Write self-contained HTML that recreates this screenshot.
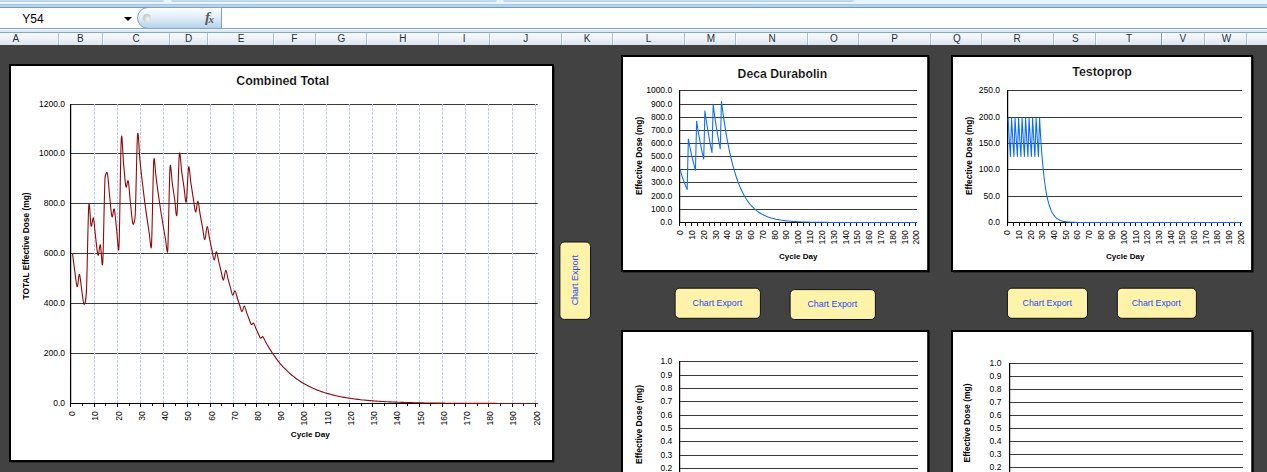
<!DOCTYPE html>
<html lang="en">
<head>
<meta charset="utf-8">
<title>Cycle Charts</title>
<style>
html,body{margin:0;padding:0;}
body{width:1267px;height:472px;overflow:hidden;background:#424242;position:relative;
  font-family:"Liberation Sans",sans-serif;}
#ribbon{position:absolute;left:0;top:0;width:1267px;height:8px;
  background:linear-gradient(to bottom,#e8f5fd 0,#e8f5fd 2px,#e6f9fe 2px,#e3f5fc 4px,#a9c1da 4px,#b3cae4 5px,#b8cfe8 5px,#bbd1ea 7px,#719dbd 7px,#719dbd 8px);}
#ribbon i{position:absolute;top:0;height:2px;background:linear-gradient(to bottom,#c5dbf0 0,#c3d9ef 60%,#a9c5e0 100%);border-radius:0 0 3px 3px;}
#fbar{position:absolute;left:0;top:8px;width:1267px;height:20px;background:#fff;}
#fline{position:absolute;left:0;top:28px;width:1267px;height:5px;
  background:linear-gradient(to bottom,#7fa3c0 0,#7fa3c0 1px,#f2f8fd 1px,#f2f8fd 2px,#dbe8f6 2px,#dbe8f6 4px,#86a8c5 4px,#86a8c5 5px);}
#name{position:absolute;left:22.3px;top:12px;font-size:12px;line-height:14px;color:#000;letter-spacing:0;}
#dd{position:absolute;left:123.5px;top:17px;width:0;height:0;border-left:4px solid transparent;border-right:4px solid transparent;border-top:4.5px solid #000;}
#pill{position:absolute;left:137px;top:7px;width:83px;height:20px;border:1px solid #7fa3c0;border-right:1px solid #7fa3c0;
  border-radius:11px 0 0 11px;background:linear-gradient(to bottom,#fdfeff 0,#e3eefa 45%,#b6d1eb 100%);}
#knob{position:absolute;left:5px;top:6px;width:8px;height:8px;border-radius:50%;
  background:radial-gradient(circle at 65% 65%,#f4f4f4 0,#dcdcdc 40%,#a9adb2 100%);}
#fx{position:absolute;left:67px;top:0px;font-family:"Liberation Serif",serif;font-style:italic;font-weight:700;color:#5c5c5c;font-size:15px;line-height:18px;letter-spacing:-1px;}
#fx small{font-size:11px;position:relative;top:0.5px;letter-spacing:0;margin-left:-0.5px;}
#hdr{position:absolute;left:0;top:33px;width:1267px;height:12px;background:linear-gradient(to bottom,#f7f9fc 0,#eef2f8 45%,#dde4ee 100%);overflow:hidden;}
#hdr .sep{position:absolute;top:0;width:1px;height:12px;box-shadow:1px 0 0 rgba(255,255,255,.55);}
#hdr .col{position:absolute;top:0;width:20px;text-align:center;font-size:10px;line-height:11.2px;color:#1f3038;}
#sheet{position:absolute;left:0;top:0;}
#sheet text{font-family:"Liberation Sans",sans-serif;}
</style>
</head>
<body>
<div id="ribbon"><i style="left:-4px;width:168px"></i><i style="left:171px;width:325.5px"></i><i style="left:503px;width:350.5px"></i></div>
<div id="fbar"></div>
<div id="fline"></div>
<div id="name">Y54</div>
<div id="dd"></div>
<div id="pill"><div id="knob"></div><div id="fx">f<small>x</small></div></div>
<div id="hdr"><i class="sep" style="left:58px;background:#a4bed8"></i><i class="sep" style="left:102px;background:#a4bed8"></i><i class="sep" style="left:169px;background:#a4bed8"></i><i class="sep" style="left:207px;background:#a4bed8"></i><i class="sep" style="left:273px;background:#a4bed8"></i><i class="sep" style="left:315px;background:#a4bed8"></i><i class="sep" style="left:366px;background:#a4bed8"></i><i class="sep" style="left:438px;background:#a4bed8"></i><i class="sep" style="left:489px;background:#a4bed8"></i><i class="sep" style="left:561px;background:#a4bed8"></i><i class="sep" style="left:612px;background:#a4bed8"></i><i class="sep" style="left:684px;background:#a4bed8"></i><i class="sep" style="left:735px;background:#a4bed8"></i><i class="sep" style="left:807px;background:#a4bed8"></i><i class="sep" style="left:858px;background:#a4bed8"></i><i class="sep" style="left:930px;background:#a4bed8"></i><i class="sep" style="left:981px;background:#a4bed8"></i><i class="sep" style="left:1053px;background:#a4bed8"></i><i class="sep" style="left:1095px;background:#a4bed8"></i><i class="sep" style="left:1161px;background:#7e9cba"></i><i class="sep" style="left:1204px;background:#a4bed8"></i><i class="sep" style="left:1246px;background:#a4bed8"></i><span class="col" style="left:5.9px">A</span><span class="col" style="left:70.4px">B</span><span class="col" style="left:126.2px">C</span><span class="col" style="left:178.5px">D</span><span class="col" style="left:231px">E</span><span class="col" style="left:284.4px">F</span><span class="col" style="left:331.4px">G</span><span class="col" style="left:392.8px">H</span><span class="col" style="left:454.2px">I</span><span class="col" style="left:515.8px">J</span><span class="col" style="left:577px">K</span><span class="col" style="left:638.6px">L</span><span class="col" style="left:701px">M</span><span class="col" style="left:762px">N</span><span class="col" style="left:824px">O</span><span class="col" style="left:884.6px">P</span><span class="col" style="left:947px">Q</span><span class="col" style="left:1007px">R</span><span class="col" style="left:1065.4px">S</span><span class="col" style="left:1119px">T</span><span class="col" style="left:1172.8px">V</span><span class="col" style="left:1216.4px">W</span></div>
<svg id="sheet" width="1267" height="472" viewBox="0 0 1267 472">
<g id="chart-combined">
<rect x="11" y="66" width="543.6" height="396.6" fill="#1b1b1b"/>
<rect x="9" y="64" width="545" height="398" fill="#000"/>
<rect x="11" y="66" width="541" height="394" fill="#fff"/>
<text x="282.7" y="85.1" font-size="12.6" text-anchor="middle" font-weight="700" stroke="#fff" stroke-width="0.2" textLength="92.8" lengthAdjust="spacingAndGlyphs">Combined Total</text>
<line x1="71" y1="104.5" x2="537.7" y2="104.5" stroke="#3a3a3a" stroke-width="1"/>
<line x1="71" y1="153.5" x2="537.7" y2="153.5" stroke="#3a3a3a" stroke-width="1"/>
<line x1="71" y1="203.5" x2="537.7" y2="203.5" stroke="#3a3a3a" stroke-width="1"/>
<line x1="71" y1="253.5" x2="537.7" y2="253.5" stroke="#3a3a3a" stroke-width="1"/>
<line x1="71" y1="303.5" x2="537.7" y2="303.5" stroke="#3a3a3a" stroke-width="1"/>
<line x1="71" y1="353.5" x2="537.7" y2="353.5" stroke="#3a3a3a" stroke-width="1"/>
<line x1="94.5" y1="104" x2="94.5" y2="403.5" stroke="#c0cbf6" stroke-width="1" stroke-dasharray="3 1"/>
<line x1="117.5" y1="104" x2="117.5" y2="403.5" stroke="#c0cbf6" stroke-width="1" stroke-dasharray="3 1"/>
<line x1="140.5" y1="104" x2="140.5" y2="403.5" stroke="#c0cbf6" stroke-width="1" stroke-dasharray="3 1"/>
<line x1="163.5" y1="104" x2="163.5" y2="403.5" stroke="#c0cbf6" stroke-width="1" stroke-dasharray="3 1"/>
<line x1="187.5" y1="104" x2="187.5" y2="403.5" stroke="#c0cbf6" stroke-width="1" stroke-dasharray="3 1"/>
<line x1="210.5" y1="104" x2="210.5" y2="403.5" stroke="#c0cbf6" stroke-width="1" stroke-dasharray="3 1"/>
<line x1="233.5" y1="104" x2="233.5" y2="403.5" stroke="#c0cbf6" stroke-width="1" stroke-dasharray="3 1"/>
<line x1="256.5" y1="104" x2="256.5" y2="403.5" stroke="#c0cbf6" stroke-width="1" stroke-dasharray="3 1"/>
<line x1="279.5" y1="104" x2="279.5" y2="403.5" stroke="#c0cbf6" stroke-width="1" stroke-dasharray="3 1"/>
<line x1="303.5" y1="104" x2="303.5" y2="403.5" stroke="#c0cbf6" stroke-width="1" stroke-dasharray="3 1"/>
<line x1="326.5" y1="104" x2="326.5" y2="403.5" stroke="#c0cbf6" stroke-width="1" stroke-dasharray="3 1"/>
<line x1="349.5" y1="104" x2="349.5" y2="403.5" stroke="#c0cbf6" stroke-width="1" stroke-dasharray="3 1"/>
<line x1="372.5" y1="104" x2="372.5" y2="403.5" stroke="#c0cbf6" stroke-width="1" stroke-dasharray="3 1"/>
<line x1="396.5" y1="104" x2="396.5" y2="403.5" stroke="#c0cbf6" stroke-width="1" stroke-dasharray="3 1"/>
<line x1="419.5" y1="104" x2="419.5" y2="403.5" stroke="#c0cbf6" stroke-width="1" stroke-dasharray="3 1"/>
<line x1="442.5" y1="104" x2="442.5" y2="403.5" stroke="#c0cbf6" stroke-width="1" stroke-dasharray="3 1"/>
<line x1="465.5" y1="104" x2="465.5" y2="403.5" stroke="#c0cbf6" stroke-width="1" stroke-dasharray="3 1"/>
<line x1="488.5" y1="104" x2="488.5" y2="403.5" stroke="#c0cbf6" stroke-width="1" stroke-dasharray="3 1"/>
<line x1="512.5" y1="104" x2="512.5" y2="403.5" stroke="#c0cbf6" stroke-width="1" stroke-dasharray="3 1"/>
<line x1="535.5" y1="104" x2="535.5" y2="403.5" stroke="#c0cbf6" stroke-width="1" stroke-dasharray="3 1"/>
<line x1="70.6" y1="104" x2="70.6" y2="404" stroke="#000" stroke-width="1.25"/>
<line x1="70.2" y1="403.5" x2="537.7" y2="403.5" stroke="#000" stroke-width="1.2"/>
<line x1="70.5" y1="403.5" x2="70.5" y2="407" stroke="#000" stroke-width="1"/>
<line x1="82.5" y1="403.5" x2="82.5" y2="406" stroke="#000" stroke-width="1"/>
<line x1="94.5" y1="403.5" x2="94.5" y2="407" stroke="#000" stroke-width="1"/>
<line x1="105.5" y1="403.5" x2="105.5" y2="406" stroke="#000" stroke-width="1"/>
<line x1="117.5" y1="403.5" x2="117.5" y2="407" stroke="#000" stroke-width="1"/>
<line x1="129.5" y1="403.5" x2="129.5" y2="406" stroke="#000" stroke-width="1"/>
<line x1="140.5" y1="403.5" x2="140.5" y2="407" stroke="#000" stroke-width="1"/>
<line x1="152.5" y1="403.5" x2="152.5" y2="406" stroke="#000" stroke-width="1"/>
<line x1="163.5" y1="403.5" x2="163.5" y2="407" stroke="#000" stroke-width="1"/>
<line x1="175.5" y1="403.5" x2="175.5" y2="406" stroke="#000" stroke-width="1"/>
<line x1="187.5" y1="403.5" x2="187.5" y2="407" stroke="#000" stroke-width="1"/>
<line x1="198.5" y1="403.5" x2="198.5" y2="406" stroke="#000" stroke-width="1"/>
<line x1="210.5" y1="403.5" x2="210.5" y2="407" stroke="#000" stroke-width="1"/>
<line x1="221.5" y1="403.5" x2="221.5" y2="406" stroke="#000" stroke-width="1"/>
<line x1="233.5" y1="403.5" x2="233.5" y2="407" stroke="#000" stroke-width="1"/>
<line x1="245.5" y1="403.5" x2="245.5" y2="406" stroke="#000" stroke-width="1"/>
<line x1="256.5" y1="403.5" x2="256.5" y2="407" stroke="#000" stroke-width="1"/>
<line x1="268.5" y1="403.5" x2="268.5" y2="406" stroke="#000" stroke-width="1"/>
<line x1="279.5" y1="403.5" x2="279.5" y2="407" stroke="#000" stroke-width="1"/>
<line x1="291.5" y1="403.5" x2="291.5" y2="406" stroke="#000" stroke-width="1"/>
<line x1="303.5" y1="403.5" x2="303.5" y2="407" stroke="#000" stroke-width="1"/>
<line x1="314.5" y1="403.5" x2="314.5" y2="406" stroke="#000" stroke-width="1"/>
<line x1="326.5" y1="403.5" x2="326.5" y2="407" stroke="#000" stroke-width="1"/>
<line x1="338.5" y1="403.5" x2="338.5" y2="406" stroke="#000" stroke-width="1"/>
<line x1="349.5" y1="403.5" x2="349.5" y2="407" stroke="#000" stroke-width="1"/>
<line x1="361.5" y1="403.5" x2="361.5" y2="406" stroke="#000" stroke-width="1"/>
<line x1="372.5" y1="403.5" x2="372.5" y2="407" stroke="#000" stroke-width="1"/>
<line x1="384.5" y1="403.5" x2="384.5" y2="406" stroke="#000" stroke-width="1"/>
<line x1="396.5" y1="403.5" x2="396.5" y2="407" stroke="#000" stroke-width="1"/>
<line x1="407.5" y1="403.5" x2="407.5" y2="406" stroke="#000" stroke-width="1"/>
<line x1="419.5" y1="403.5" x2="419.5" y2="407" stroke="#000" stroke-width="1"/>
<line x1="430.5" y1="403.5" x2="430.5" y2="406" stroke="#000" stroke-width="1"/>
<line x1="442.5" y1="403.5" x2="442.5" y2="407" stroke="#000" stroke-width="1"/>
<line x1="454.5" y1="403.5" x2="454.5" y2="406" stroke="#000" stroke-width="1"/>
<line x1="465.5" y1="403.5" x2="465.5" y2="407" stroke="#000" stroke-width="1"/>
<line x1="477.5" y1="403.5" x2="477.5" y2="406" stroke="#000" stroke-width="1"/>
<line x1="488.5" y1="403.5" x2="488.5" y2="407" stroke="#000" stroke-width="1"/>
<line x1="500.5" y1="403.5" x2="500.5" y2="406" stroke="#000" stroke-width="1"/>
<line x1="512.5" y1="403.5" x2="512.5" y2="407" stroke="#000" stroke-width="1"/>
<line x1="523.5" y1="403.5" x2="523.5" y2="406" stroke="#000" stroke-width="1"/>
<line x1="535.5" y1="403.5" x2="535.5" y2="407" stroke="#000" stroke-width="1"/>
<text x="65" y="106.7" font-size="8.5" text-anchor="end">1200.0</text>
<text x="65" y="155.7" font-size="8.5" text-anchor="end">1000.0</text>
<text x="65" y="205.7" font-size="8.5" text-anchor="end">800.0</text>
<text x="65" y="255.7" font-size="8.5" text-anchor="end">600.0</text>
<text x="65" y="305.7" font-size="8.5" text-anchor="end">400.0</text>
<text x="65" y="355.7" font-size="8.5" text-anchor="end">200.0</text>
<text x="65" y="405.7" font-size="8.5" text-anchor="end">0.0</text>
<text x="75.26" y="411.3" font-size="8.5" text-anchor="end" transform="rotate(-90 75.26 411.3)">0</text>
<text x="98.48" y="411.3" font-size="8.5" text-anchor="end" transform="rotate(-90 98.48 411.3)">10</text>
<text x="121.7" y="411.3" font-size="8.5" text-anchor="end" transform="rotate(-90 121.7 411.3)">20</text>
<text x="144.92" y="411.3" font-size="8.5" text-anchor="end" transform="rotate(-90 144.92 411.3)">30</text>
<text x="168.14" y="411.3" font-size="8.5" text-anchor="end" transform="rotate(-90 168.14 411.3)">40</text>
<text x="191.36" y="411.3" font-size="8.5" text-anchor="end" transform="rotate(-90 191.36 411.3)">50</text>
<text x="214.57" y="411.3" font-size="8.5" text-anchor="end" transform="rotate(-90 214.57 411.3)">60</text>
<text x="237.79" y="411.3" font-size="8.5" text-anchor="end" transform="rotate(-90 237.79 411.3)">70</text>
<text x="261.01" y="411.3" font-size="8.5" text-anchor="end" transform="rotate(-90 261.01 411.3)">80</text>
<text x="284.23" y="411.3" font-size="8.5" text-anchor="end" transform="rotate(-90 284.23 411.3)">90</text>
<text x="307.45" y="411.3" font-size="8.5" text-anchor="end" transform="rotate(-90 307.45 411.3)">100</text>
<text x="330.67" y="411.3" font-size="8.5" text-anchor="end" transform="rotate(-90 330.67 411.3)">110</text>
<text x="353.89" y="411.3" font-size="8.5" text-anchor="end" transform="rotate(-90 353.89 411.3)">120</text>
<text x="377.11" y="411.3" font-size="8.5" text-anchor="end" transform="rotate(-90 377.11 411.3)">130</text>
<text x="400.33" y="411.3" font-size="8.5" text-anchor="end" transform="rotate(-90 400.33 411.3)">140</text>
<text x="423.54" y="411.3" font-size="8.5" text-anchor="end" transform="rotate(-90 423.54 411.3)">150</text>
<text x="446.76" y="411.3" font-size="8.5" text-anchor="end" transform="rotate(-90 446.76 411.3)">160</text>
<text x="469.98" y="411.3" font-size="8.5" text-anchor="end" transform="rotate(-90 469.98 411.3)">170</text>
<text x="493.2" y="411.3" font-size="8.5" text-anchor="end" transform="rotate(-90 493.2 411.3)">180</text>
<text x="516.42" y="411.3" font-size="8.5" text-anchor="end" transform="rotate(-90 516.42 411.3)">190</text>
<text x="539.64" y="411.3" font-size="8.5" text-anchor="end" transform="rotate(-90 539.64 411.3)">200</text>
<text x="29.2" y="246" font-size="8.3" text-anchor="middle" font-weight="700" transform="rotate(-90 29.2 246)" textLength="107" lengthAdjust="spacingAndGlyphs">TOTAL Effective Dose (mg)</text>
<text x="310.3" y="436.9" font-size="8" text-anchor="middle" font-weight="700" textLength="38.9" lengthAdjust="spacingAndGlyphs">Cycle Day</text>
<path d="M72.51 253.5C72.9 256.5 74.06 265.96 74.83 271.5C75.61 277.04 76.38 286.26 77.15 286.73C77.93 287.21 78.7 273.68 79.48 274.35C80.25 275.03 81.02 285.75 81.8 290.79C82.57 295.83 83.35 304.56 84.12 304.58C84.89 304.59 86.12 297.81 86.44 290.86C87.22 274.4 87.99 216.62 88.76 205.81C89.49 195.69 90.31 223.91 91.09 225.97C91.86 228.02 92.63 216.11 93.41 218.15C94.18 220.18 94.96 231.99 95.73 238.17C96.5 244.35 97.28 254.13 98.05 255.23C98.83 256.34 99.6 243.5 100.37 244.79C101.15 246.08 102.06 272.14 102.7 262.99C103.47 251.88 104.24 193.1 105.02 178.14C105.16 175.43 106.68 170.6 107.34 173.23C108.11 176.3 108.89 189.31 109.66 196.55C110.44 203.78 111.21 214.57 111.98 216.66C112.76 218.75 113.53 206.87 114.3 209.09C115.08 211.3 115.85 223.5 116.63 229.96C117.4 236.42 118.49 256.83 118.95 247.83C119.72 232.68 120.5 153.04 121.27 139.05C121.96 126.59 122.82 155.98 123.59 163.91C124.37 171.84 125.14 183.74 125.91 186.63C126.67 189.46 127.48 178.4 128.24 181.23C129.01 184.15 129.78 197.01 130.56 204.12C131.33 211.22 132.11 221.97 132.88 223.86C133.65 225.74 134.97 219.79 135.2 215.43C135.98 200.66 136.75 144.56 137.52 135.23C138.3 125.91 139.07 151.86 139.85 159.48C140.62 167.1 141.39 174.2 142.17 180.97C142.94 187.73 143.72 194.05 144.49 200.09C145.26 206.12 146.04 211.76 146.81 217.16C147.59 222.56 148.36 227.62 149.13 232.46C149.91 237.3 151.01 253.17 151.46 246.21C152.23 234.22 153 171.95 153.78 160.52C154.36 151.9 155.33 171.93 156.1 177.66C156.87 183.39 157.65 189.41 158.42 194.93C159.19 200.44 159.97 205.69 160.74 210.74C161.52 215.79 162.29 220.6 163.06 225.23C163.84 229.86 164.61 234.28 165.39 238.53C166.16 242.78 167.3 256.95 167.71 250.75C168.48 238.86 169.26 178.43 170.03 167.23C170.6 159 171.58 178.21 172.35 183.55C173.13 188.9 173.9 194.23 174.67 199.28C175.45 204.33 176.23 221.23 177 213.88C177.77 206.41 178.54 161.59 179.32 154.51C180.09 147.43 180.87 165.96 181.64 171.39C182.41 176.82 183.19 182.03 183.96 187.08C184.74 192.12 185.51 204.97 186.28 201.66C187.06 198.35 187.83 170.3 188.61 167.22C189.38 164.14 190.15 178.04 190.93 183.18C191.7 188.32 192.48 193.26 193.25 198.05C194.02 202.84 194.8 211.36 195.57 211.91C196.35 212.46 197.12 200.82 197.89 201.33C198.67 201.84 199.44 210.58 200.21 214.97C200.99 219.37 201.76 223.6 202.54 227.7C203.31 231.8 204.08 239.75 204.86 239.57C205.63 239.4 206.41 226.83 207.18 226.66C207.95 226.48 208.73 234.68 209.5 238.5C210.28 242.32 211.05 245.99 211.82 249.56C212.6 253.12 213.37 259.51 214.15 259.88C214.92 260.25 215.69 251.44 216.47 251.77C217.24 252.1 218.02 258.61 218.79 261.86C219.56 265.11 220.34 268.24 221.11 271.28C221.89 274.32 222.66 280.24 223.43 280.08C224.21 279.91 224.98 270.45 225.76 270.29C226.53 270.14 227.3 276.29 228.08 279.14C228.85 281.99 229.63 284.74 230.4 287.4C231.17 290.06 231.95 294.54 232.72 295.12C233.5 295.69 234.27 290.3 235.04 290.83C235.82 291.35 236.59 295.88 237.37 298.28C238.14 300.68 238.91 303 239.69 305.24C240.46 307.49 241.23 311.61 242.01 311.75C242.78 311.89 243.56 305.94 244.33 306.08C245.1 306.22 245.88 310.49 246.65 312.59C247.43 314.69 248.2 316.72 248.97 318.68C249.75 320.64 250.52 323.62 251.3 324.37C252.07 325.13 252.84 322.51 253.62 323.2C254.39 323.89 255.17 326.8 255.94 328.51C256.71 330.23 257.49 331.88 258.26 333.48C259.04 335.08 259.81 337.58 260.58 338.12C261.36 338.66 262.13 336.21 262.91 336.71C263.68 337.22 264.45 339.71 265.23 341.14C266 342.57 266.78 343.95 267.55 345.28C268.32 346.62 269.1 347.91 269.87 349.16C270.65 350.41 271.42 351.61 272.19 352.78C272.97 353.95 273.74 355.07 274.52 356.16C275.29 357.26 276.06 358.31 276.84 359.33C277.61 360.35 278.39 361.34 279.16 362.29C279.93 363.25 280.71 364.18 281.48 365.06C282.26 365.95 283.03 366.78 283.8 367.59C284.58 368.41 285.35 369.19 286.12 369.96C286.9 370.72 287.67 371.45 288.45 372.16C289.22 372.88 289.99 373.56 290.77 374.23C291.54 374.89 292.32 375.53 293.09 376.15C293.86 376.77 294.64 377.37 295.41 377.95C296.19 378.53 296.96 379.09 297.73 379.63C298.51 380.17 299.28 380.69 300.06 381.2C300.83 381.71 301.6 382.19 302.38 382.67C303.15 383.14 303.93 383.6 304.7 384.04C305.47 384.48 306.25 384.9 307.02 385.32C307.8 385.73 308.57 386.13 309.34 386.51C310.12 386.9 310.89 387.27 311.67 387.63C312.44 387.99 313.21 388.34 313.99 388.67C314.76 389.01 315.54 389.33 316.31 389.65C317.08 389.96 317.86 390.26 318.63 390.56C319.41 390.85 320.18 391.13 320.95 391.41C321.73 391.68 322.5 391.94 323.28 392.2C324.05 392.46 324.82 392.7 325.6 392.94C326.37 393.18 327.14 393.41 327.92 393.64C328.69 393.86 329.47 394.08 330.24 394.28C331.01 394.49 331.79 394.69 332.56 394.89C333.34 395.08 334.11 395.27 334.88 395.45C335.66 395.64 336.43 395.81 337.21 395.98C337.98 396.15 338.75 396.32 339.53 396.48C340.3 396.64 341.08 396.79 341.85 396.94C342.62 397.09 343.4 397.23 344.17 397.37C344.95 397.51 345.72 397.64 346.49 397.77C347.27 397.9 348.04 398.03 348.82 398.15C349.59 398.27 350.36 398.38 351.14 398.5C351.91 398.61 352.69 398.72 353.46 398.83C354.23 398.93 355.01 399.03 355.78 399.13C356.56 399.23 357.33 399.33 358.1 399.42C358.88 399.51 359.65 399.6 360.43 399.69C361.2 399.77 361.97 399.86 362.75 399.94C363.52 400.02 364.3 400.1 365.07 400.17C365.84 400.25 366.62 400.32 367.39 400.39C368.17 400.46 368.94 400.53 369.71 400.59C370.49 400.66 371.26 400.72 372.03 400.78C372.81 400.84 373.58 400.9 374.36 400.96C375.13 401.02 375.9 401.07 376.68 401.13C377.45 401.18 378.23 401.23 379 401.28C379.77 401.33 380.55 401.38 381.32 401.43C382.1 401.48 382.87 401.52 383.64 401.56C384.42 401.61 385.19 401.65 385.97 401.69C386.74 401.73 387.51 401.77 388.29 401.81C389.06 401.85 389.84 401.88 390.61 401.92C391.38 401.96 392.16 401.99 392.93 402.02C393.71 402.06 394.48 402.09 395.25 402.12C396.03 402.15 396.8 402.18 397.58 402.21C398.35 402.24 399.12 402.27 399.9 402.3C400.67 402.32 401.45 402.35 402.22 402.37C402.99 402.4 403.77 402.42 404.54 402.45C405.32 402.47 406.09 402.49 406.86 402.52C407.64 402.54 408.41 402.56 409.19 402.58C409.96 402.6 410.73 402.62 411.51 402.64C412.28 402.66 413.05 402.68 413.83 402.7C414.6 402.72 415.38 402.73 416.15 402.75C416.92 402.77 417.7 402.78 418.47 402.8C419.25 402.82 420.02 402.83 420.79 402.85C421.57 402.86 422.34 402.87 423.12 402.89C423.89 402.9 424.66 402.92 425.44 402.93C426.21 402.94 426.99 402.95 427.76 402.97C428.53 402.98 429.31 402.99 430.08 403C430.86 403.01 431.63 403.02 432.4 403.03C433.18 403.04 433.95 403.05 434.73 403.06C435.5 403.07 436.27 403.08 437.05 403.09C437.82 403.1 438.6 403.11 439.37 403.12C440.14 403.13 440.92 403.14 441.69 403.14C442.47 403.15 443.24 403.16 444.01 403.17C444.79 403.17 445.56 403.18 446.34 403.19C447.11 403.2 447.88 403.2 448.66 403.21C449.43 403.22 450.21 403.22 450.98 403.23C451.75 403.23 452.53 403.24 453.3 403.25C454.07 403.25 454.85 403.26 455.62 403.26C456.4 403.27 457.17 403.27 457.94 403.28C458.72 403.28 459.49 403.29 460.27 403.29C461.04 403.3 461.81 403.3 462.59 403.31C463.36 403.31 464.14 403.31 464.91 403.32C465.68 403.32 466.46 403.33 467.23 403.33C468.01 403.33 468.78 403.34 469.55 403.34C470.33 403.35 471.1 403.35 471.88 403.35C472.65 403.36 473.42 403.36 474.2 403.36C474.97 403.36 475.75 403.37 476.52 403.37C477.29 403.37 478.07 403.38 478.84 403.38C479.62 403.38 480.39 403.38 481.16 403.39C481.94 403.39 482.71 403.39 483.49 403.39C484.26 403.4 485.03 403.4 485.81 403.4C486.58 403.4 487.36 403.41 488.13 403.41C488.9 403.41 489.68 403.41 490.45 403.41C491.23 403.42 492 403.42 492.77 403.42C493.55 403.42 494.32 403.42 495.1 403.42C495.87 403.43 496.64 403.43 497.42 403.43C498.19 403.43 498.96 403.43 499.74 403.43C500.51 403.44 501.29 403.44 502.06 403.44C502.83 403.44 503.61 403.44 504.38 403.44C505.16 403.44 505.93 403.45 506.7 403.45C507.48 403.45 508.25 403.45 509.03 403.45C509.8 403.45 510.57 403.45 511.35 403.45C512.12 403.45 512.9 403.46 513.67 403.46C514.44 403.46 515.22 403.46 515.99 403.46C516.77 403.46 517.54 403.46 518.31 403.46C519.09 403.46 519.86 403.46 520.64 403.46C521.41 403.47 522.18 403.47 522.96 403.47C523.73 403.47 524.51 403.47 525.28 403.47C526.05 403.47 526.83 403.47 527.6 403.47C528.38 403.47 529.15 403.47 529.92 403.47C530.7 403.47 531.47 403.47 532.25 403.47C533.02 403.48 533.79 403.48 534.57 403.48C535.34 403.48 536.5 403.48 536.89 403.48" fill="none" stroke="#8e0a0a" stroke-width="1.1" stroke-linejoin="round"/>
</g>
<g id="chart-deca">
<rect x="623" y="57" width="306.8" height="215.6" fill="#1b1b1b"/>
<rect x="621" y="55" width="308.2" height="217" fill="#000"/>
<rect x="623" y="57" width="304.2" height="213" fill="#fff"/>
<text x="782.4" y="77.8" font-size="12.4" text-anchor="middle" font-weight="700" stroke="#fff" stroke-width="0.2" textLength="89.6" lengthAdjust="spacingAndGlyphs">Deca Durabolin</text>
<line x1="679.5" y1="90.5" x2="917" y2="90.5" stroke="#3a3a3a" stroke-width="1"/>
<line x1="679.5" y1="104.5" x2="917" y2="104.5" stroke="#3a3a3a" stroke-width="1"/>
<line x1="679.5" y1="117.5" x2="917" y2="117.5" stroke="#3a3a3a" stroke-width="1"/>
<line x1="679.5" y1="130.5" x2="917" y2="130.5" stroke="#3a3a3a" stroke-width="1"/>
<line x1="679.5" y1="143.5" x2="917" y2="143.5" stroke="#3a3a3a" stroke-width="1"/>
<line x1="679.5" y1="156.5" x2="917" y2="156.5" stroke="#3a3a3a" stroke-width="1"/>
<line x1="679.5" y1="169.5" x2="917" y2="169.5" stroke="#3a3a3a" stroke-width="1"/>
<line x1="679.5" y1="182.5" x2="917" y2="182.5" stroke="#3a3a3a" stroke-width="1"/>
<line x1="679.5" y1="196.5" x2="917" y2="196.5" stroke="#3a3a3a" stroke-width="1"/>
<line x1="679.5" y1="209.5" x2="917" y2="209.5" stroke="#3a3a3a" stroke-width="1"/>
<line x1="679.6" y1="90" x2="679.6" y2="223" stroke="#000" stroke-width="1.25"/>
<line x1="679" y1="222.5" x2="917" y2="222.5" stroke="#000" stroke-width="1.1"/>
<line x1="679.5" y1="222.5" x2="679.5" y2="226" stroke="#000" stroke-width="1"/>
<line x1="685.5" y1="222.5" x2="685.5" y2="226" stroke="#000" stroke-width="1"/>
<line x1="691.5" y1="222.5" x2="691.5" y2="226" stroke="#000" stroke-width="1"/>
<line x1="697.5" y1="222.5" x2="697.5" y2="226" stroke="#000" stroke-width="1"/>
<line x1="703.5" y1="222.5" x2="703.5" y2="226" stroke="#000" stroke-width="1"/>
<line x1="709.5" y1="222.5" x2="709.5" y2="226" stroke="#000" stroke-width="1"/>
<line x1="714.5" y1="222.5" x2="714.5" y2="226" stroke="#000" stroke-width="1"/>
<line x1="720.5" y1="222.5" x2="720.5" y2="226" stroke="#000" stroke-width="1"/>
<line x1="726.5" y1="222.5" x2="726.5" y2="226" stroke="#000" stroke-width="1"/>
<line x1="732.5" y1="222.5" x2="732.5" y2="226" stroke="#000" stroke-width="1"/>
<line x1="738.5" y1="222.5" x2="738.5" y2="226" stroke="#000" stroke-width="1"/>
<line x1="744.5" y1="222.5" x2="744.5" y2="226" stroke="#000" stroke-width="1"/>
<line x1="750.5" y1="222.5" x2="750.5" y2="226" stroke="#000" stroke-width="1"/>
<line x1="756.5" y1="222.5" x2="756.5" y2="226" stroke="#000" stroke-width="1"/>
<line x1="762.5" y1="222.5" x2="762.5" y2="226" stroke="#000" stroke-width="1"/>
<line x1="768.5" y1="222.5" x2="768.5" y2="226" stroke="#000" stroke-width="1"/>
<line x1="774.5" y1="222.5" x2="774.5" y2="226" stroke="#000" stroke-width="1"/>
<line x1="779.5" y1="222.5" x2="779.5" y2="226" stroke="#000" stroke-width="1"/>
<line x1="785.5" y1="222.5" x2="785.5" y2="226" stroke="#000" stroke-width="1"/>
<line x1="791.5" y1="222.5" x2="791.5" y2="226" stroke="#000" stroke-width="1"/>
<line x1="797.5" y1="222.5" x2="797.5" y2="226" stroke="#000" stroke-width="1"/>
<line x1="803.5" y1="222.5" x2="803.5" y2="226" stroke="#000" stroke-width="1"/>
<line x1="809.5" y1="222.5" x2="809.5" y2="226" stroke="#000" stroke-width="1"/>
<line x1="815.5" y1="222.5" x2="815.5" y2="226" stroke="#000" stroke-width="1"/>
<line x1="821.5" y1="222.5" x2="821.5" y2="226" stroke="#000" stroke-width="1"/>
<line x1="827.5" y1="222.5" x2="827.5" y2="226" stroke="#000" stroke-width="1"/>
<line x1="833.5" y1="222.5" x2="833.5" y2="226" stroke="#000" stroke-width="1"/>
<line x1="839.5" y1="222.5" x2="839.5" y2="226" stroke="#000" stroke-width="1"/>
<line x1="844.5" y1="222.5" x2="844.5" y2="226" stroke="#000" stroke-width="1"/>
<line x1="850.5" y1="222.5" x2="850.5" y2="226" stroke="#000" stroke-width="1"/>
<line x1="856.5" y1="222.5" x2="856.5" y2="226" stroke="#000" stroke-width="1"/>
<line x1="862.5" y1="222.5" x2="862.5" y2="226" stroke="#000" stroke-width="1"/>
<line x1="868.5" y1="222.5" x2="868.5" y2="226" stroke="#000" stroke-width="1"/>
<line x1="874.5" y1="222.5" x2="874.5" y2="226" stroke="#000" stroke-width="1"/>
<line x1="880.5" y1="222.5" x2="880.5" y2="226" stroke="#000" stroke-width="1"/>
<line x1="886.5" y1="222.5" x2="886.5" y2="226" stroke="#000" stroke-width="1"/>
<line x1="892.5" y1="222.5" x2="892.5" y2="226" stroke="#000" stroke-width="1"/>
<line x1="898.5" y1="222.5" x2="898.5" y2="226" stroke="#000" stroke-width="1"/>
<line x1="904.5" y1="222.5" x2="904.5" y2="226" stroke="#000" stroke-width="1"/>
<line x1="909.5" y1="222.5" x2="909.5" y2="226" stroke="#000" stroke-width="1"/>
<line x1="915.5" y1="222.5" x2="915.5" y2="226" stroke="#000" stroke-width="1"/>
<text x="672.2" y="93.1" font-size="8.5" text-anchor="end">1000.0</text>
<text x="672.2" y="107.1" font-size="8.5" text-anchor="end">900.0</text>
<text x="672.2" y="120.1" font-size="8.5" text-anchor="end">800.0</text>
<text x="672.2" y="133.1" font-size="8.5" text-anchor="end">700.0</text>
<text x="672.2" y="146.1" font-size="8.5" text-anchor="end">600.0</text>
<text x="672.2" y="159.1" font-size="8.5" text-anchor="end">500.0</text>
<text x="672.2" y="172.1" font-size="8.5" text-anchor="end">400.0</text>
<text x="672.2" y="185.1" font-size="8.5" text-anchor="end">300.0</text>
<text x="672.2" y="199.1" font-size="8.5" text-anchor="end">200.0</text>
<text x="672.2" y="212.1" font-size="8.5" text-anchor="end">100.0</text>
<text x="672.2" y="225.1" font-size="8.5" text-anchor="end">0.0</text>
<text x="683.14" y="230.3" font-size="8.5" text-anchor="end" transform="rotate(-90 683.14 230.3)">0</text>
<text x="694.96" y="230.3" font-size="8.5" text-anchor="end" transform="rotate(-90 694.96 230.3)">10</text>
<text x="706.77" y="230.3" font-size="8.5" text-anchor="end" transform="rotate(-90 706.77 230.3)">20</text>
<text x="718.59" y="230.3" font-size="8.5" text-anchor="end" transform="rotate(-90 718.59 230.3)">30</text>
<text x="730.4" y="230.3" font-size="8.5" text-anchor="end" transform="rotate(-90 730.4 230.3)">40</text>
<text x="742.22" y="230.3" font-size="8.5" text-anchor="end" transform="rotate(-90 742.22 230.3)">50</text>
<text x="754.04" y="230.3" font-size="8.5" text-anchor="end" transform="rotate(-90 754.04 230.3)">60</text>
<text x="765.85" y="230.3" font-size="8.5" text-anchor="end" transform="rotate(-90 765.85 230.3)">70</text>
<text x="777.67" y="230.3" font-size="8.5" text-anchor="end" transform="rotate(-90 777.67 230.3)">80</text>
<text x="789.48" y="230.3" font-size="8.5" text-anchor="end" transform="rotate(-90 789.48 230.3)">90</text>
<text x="801.3" y="230.3" font-size="8.5" text-anchor="end" transform="rotate(-90 801.3 230.3)">100</text>
<text x="813.12" y="230.3" font-size="8.5" text-anchor="end" transform="rotate(-90 813.12 230.3)">110</text>
<text x="824.93" y="230.3" font-size="8.5" text-anchor="end" transform="rotate(-90 824.93 230.3)">120</text>
<text x="836.75" y="230.3" font-size="8.5" text-anchor="end" transform="rotate(-90 836.75 230.3)">130</text>
<text x="848.56" y="230.3" font-size="8.5" text-anchor="end" transform="rotate(-90 848.56 230.3)">140</text>
<text x="860.38" y="230.3" font-size="8.5" text-anchor="end" transform="rotate(-90 860.38 230.3)">150</text>
<text x="872.2" y="230.3" font-size="8.5" text-anchor="end" transform="rotate(-90 872.2 230.3)">160</text>
<text x="884.01" y="230.3" font-size="8.5" text-anchor="end" transform="rotate(-90 884.01 230.3)">170</text>
<text x="895.83" y="230.3" font-size="8.5" text-anchor="end" transform="rotate(-90 895.83 230.3)">180</text>
<text x="907.64" y="230.3" font-size="8.5" text-anchor="end" transform="rotate(-90 907.64 230.3)">190</text>
<text x="919.46" y="230.3" font-size="8.5" text-anchor="end" transform="rotate(-90 919.46 230.3)">200</text>
<text x="642" y="155.9" font-size="8.3" text-anchor="middle" font-weight="700" transform="rotate(-90 642 155.9)" textLength="78.3" lengthAdjust="spacingAndGlyphs">Effective Dose (mg)</text>
<text x="798.3" y="258.8" font-size="8" text-anchor="middle" font-weight="700" textLength="38.5" lengthAdjust="spacingAndGlyphs">Cycle Day</text>
<path d="M680.09 169.7L681.27 173.66L682.45 177.32L683.64 180.71L684.82 183.85L686 186.74L687.18 189.43L688.36 138.97L689.54 145.24L690.73 151.03L691.91 156.39L693.09 161.35L694.27 165.94L695.45 170.18L696.63 121.17L697.81 128.77L699 135.8L700.18 142.3L701.36 148.32L702.54 153.88L703.72 159.03L704.9 110.86L706.09 119.23L707.27 126.98L708.45 134.14L709.63 140.77L710.81 146.9L711.99 152.57L713.18 104.88L714.36 113.7L715.54 121.86L716.72 129.41L717.9 136.39L719.08 142.85L720.26 148.82L721.45 101.42L722.63 110.5L723.81 118.9L724.99 126.67L726.17 133.86L727.35 140.5L728.54 146.65L729.72 152.34L730.9 157.6L732.08 162.47L733.26 166.97L734.44 171.14L735.63 174.99L736.81 178.55L737.99 181.85L739.17 184.9L740.35 187.72L741.53 190.33L742.72 192.74L743.9 194.97L745.08 197.04L746.26 198.95L747.44 200.71L748.62 202.35L749.8 203.86L750.99 205.26L752.17 206.55L753.35 207.75L754.53 208.85L755.71 209.88L756.89 210.82L758.08 211.7L759.26 212.51L760.44 213.26L761.62 213.95L762.8 214.59L763.98 215.19L765.17 215.73L766.35 216.24L767.53 216.71L768.71 217.15L769.89 217.55L771.07 217.92L772.25 218.26L773.44 218.58L774.62 218.87L775.8 219.15L776.98 219.4L778.16 219.63L779.34 219.85L780.53 220.04L781.71 220.23L782.89 220.4L784.07 220.56L785.25 220.7L786.43 220.84L787.62 220.96L788.8 221.08L789.98 221.18L791.16 221.28L792.34 221.37L793.52 221.46L794.71 221.54L795.89 221.61L797.07 221.68L798.25 221.74L799.43 221.79L800.61 221.85L801.79 221.9L802.98 221.94L804.16 221.98L805.34 222.02L806.52 222.06L807.7 222.09L808.88 222.12L810.07 222.15L811.25 222.18L812.43 222.2L813.61 222.22L814.79 222.24L815.97 222.26L817.16 222.28L818.34 222.3L819.52 222.31L820.7 222.33L821.88 222.34L823.06 222.35L824.25 222.36L825.43 222.37L826.61 222.38L827.79 222.39L828.97 222.4L830.15 222.41L831.33 222.41L832.52 222.42L833.7 222.43L834.88 222.43L836.06 222.44L837.24 222.44L838.42 222.45L839.61 222.45L840.79 222.45L841.97 222.46L843.15 222.46L844.33 222.46L845.51 222.47L846.7 222.47L847.88 222.47L849.06 222.47L850.24 222.48L851.42 222.48L852.6 222.48L853.78 222.48L854.97 222.48L856.15 222.48L857.33 222.48L858.51 222.49L859.69 222.49L860.87 222.49L862.06 222.49L863.24 222.49L864.42 222.49L865.6 222.49L866.78 222.49L867.96 222.49L869.15 222.49L870.33 222.49L871.51 222.49L872.69 222.49L873.87 222.49L875.05 222.5L876.24 222.5L877.42 222.5L878.6 222.5L879.78 222.5L880.96 222.5L882.14 222.5L883.32 222.5L884.51 222.5L885.69 222.5L886.87 222.5L888.05 222.5L889.23 222.5L890.41 222.5L891.6 222.5L892.78 222.5L893.96 222.5L895.14 222.5L896.32 222.5L897.5 222.5L898.69 222.5L899.87 222.5L901.05 222.5L902.23 222.5L903.41 222.5L904.59 222.5L905.77 222.5L906.96 222.5L908.14 222.5L909.32 222.5L910.5 222.5L911.68 222.5L912.86 222.5L914.05 222.5L915.23 222.5L916.41 222.5" fill="none" stroke="#0a6aff" stroke-width="1.05" stroke-linejoin="round"/>
</g>
<g id="chart-testoprop">
<rect x="953" y="57" width="300.7" height="215.6" fill="#1b1b1b"/>
<rect x="951" y="55" width="302.1" height="217" fill="#000"/>
<rect x="953" y="57" width="298.1" height="213" fill="#fff"/>
<text x="1102.1" y="76" font-size="12.4" text-anchor="middle" font-weight="700" stroke="#fff" stroke-width="0.2" textLength="59.7" lengthAdjust="spacingAndGlyphs">Testoprop</text>
<line x1="1007.5" y1="90.5" x2="1242" y2="90.5" stroke="#3a3a3a" stroke-width="1"/>
<line x1="1007.5" y1="117.5" x2="1242" y2="117.5" stroke="#3a3a3a" stroke-width="1"/>
<line x1="1007.5" y1="143.5" x2="1242" y2="143.5" stroke="#3a3a3a" stroke-width="1"/>
<line x1="1007.5" y1="169.5" x2="1242" y2="169.5" stroke="#3a3a3a" stroke-width="1"/>
<line x1="1007.5" y1="196.5" x2="1242" y2="196.5" stroke="#3a3a3a" stroke-width="1"/>
<line x1="1007.6" y1="90" x2="1007.6" y2="223" stroke="#000" stroke-width="1.25"/>
<line x1="1007" y1="222.5" x2="1242" y2="222.5" stroke="#000" stroke-width="1.1"/>
<line x1="1007.5" y1="222.5" x2="1007.5" y2="226" stroke="#000" stroke-width="1"/>
<line x1="1013.5" y1="222.5" x2="1013.5" y2="226" stroke="#000" stroke-width="1"/>
<line x1="1019.5" y1="222.5" x2="1019.5" y2="226" stroke="#000" stroke-width="1"/>
<line x1="1024.5" y1="222.5" x2="1024.5" y2="226" stroke="#000" stroke-width="1"/>
<line x1="1030.5" y1="222.5" x2="1030.5" y2="226" stroke="#000" stroke-width="1"/>
<line x1="1036.5" y1="222.5" x2="1036.5" y2="226" stroke="#000" stroke-width="1"/>
<line x1="1042.5" y1="222.5" x2="1042.5" y2="226" stroke="#000" stroke-width="1"/>
<line x1="1048.5" y1="222.5" x2="1048.5" y2="226" stroke="#000" stroke-width="1"/>
<line x1="1054.5" y1="222.5" x2="1054.5" y2="226" stroke="#000" stroke-width="1"/>
<line x1="1060.5" y1="222.5" x2="1060.5" y2="226" stroke="#000" stroke-width="1"/>
<line x1="1065.5" y1="222.5" x2="1065.5" y2="226" stroke="#000" stroke-width="1"/>
<line x1="1071.5" y1="222.5" x2="1071.5" y2="226" stroke="#000" stroke-width="1"/>
<line x1="1077.5" y1="222.5" x2="1077.5" y2="226" stroke="#000" stroke-width="1"/>
<line x1="1083.5" y1="222.5" x2="1083.5" y2="226" stroke="#000" stroke-width="1"/>
<line x1="1089.5" y1="222.5" x2="1089.5" y2="226" stroke="#000" stroke-width="1"/>
<line x1="1094.5" y1="222.5" x2="1094.5" y2="226" stroke="#000" stroke-width="1"/>
<line x1="1100.5" y1="222.5" x2="1100.5" y2="226" stroke="#000" stroke-width="1"/>
<line x1="1106.5" y1="222.5" x2="1106.5" y2="226" stroke="#000" stroke-width="1"/>
<line x1="1112.5" y1="222.5" x2="1112.5" y2="226" stroke="#000" stroke-width="1"/>
<line x1="1118.5" y1="222.5" x2="1118.5" y2="226" stroke="#000" stroke-width="1"/>
<line x1="1124.5" y1="222.5" x2="1124.5" y2="226" stroke="#000" stroke-width="1"/>
<line x1="1130.5" y1="222.5" x2="1130.5" y2="226" stroke="#000" stroke-width="1"/>
<line x1="1135.5" y1="222.5" x2="1135.5" y2="226" stroke="#000" stroke-width="1"/>
<line x1="1141.5" y1="222.5" x2="1141.5" y2="226" stroke="#000" stroke-width="1"/>
<line x1="1147.5" y1="222.5" x2="1147.5" y2="226" stroke="#000" stroke-width="1"/>
<line x1="1153.5" y1="222.5" x2="1153.5" y2="226" stroke="#000" stroke-width="1"/>
<line x1="1159.5" y1="222.5" x2="1159.5" y2="226" stroke="#000" stroke-width="1"/>
<line x1="1164.5" y1="222.5" x2="1164.5" y2="226" stroke="#000" stroke-width="1"/>
<line x1="1170.5" y1="222.5" x2="1170.5" y2="226" stroke="#000" stroke-width="1"/>
<line x1="1176.5" y1="222.5" x2="1176.5" y2="226" stroke="#000" stroke-width="1"/>
<line x1="1182.5" y1="222.5" x2="1182.5" y2="226" stroke="#000" stroke-width="1"/>
<line x1="1188.5" y1="222.5" x2="1188.5" y2="226" stroke="#000" stroke-width="1"/>
<line x1="1194.5" y1="222.5" x2="1194.5" y2="226" stroke="#000" stroke-width="1"/>
<line x1="1200.5" y1="222.5" x2="1200.5" y2="226" stroke="#000" stroke-width="1"/>
<line x1="1205.5" y1="222.5" x2="1205.5" y2="226" stroke="#000" stroke-width="1"/>
<line x1="1211.5" y1="222.5" x2="1211.5" y2="226" stroke="#000" stroke-width="1"/>
<line x1="1217.5" y1="222.5" x2="1217.5" y2="226" stroke="#000" stroke-width="1"/>
<line x1="1223.5" y1="222.5" x2="1223.5" y2="226" stroke="#000" stroke-width="1"/>
<line x1="1229.5" y1="222.5" x2="1229.5" y2="226" stroke="#000" stroke-width="1"/>
<line x1="1234.5" y1="222.5" x2="1234.5" y2="226" stroke="#000" stroke-width="1"/>
<line x1="1240.5" y1="222.5" x2="1240.5" y2="226" stroke="#000" stroke-width="1"/>
<text x="1000.1" y="93.1" font-size="8.5" text-anchor="end">250.0</text>
<text x="1000.1" y="120.1" font-size="8.5" text-anchor="end">200.0</text>
<text x="1000.1" y="146.1" font-size="8.5" text-anchor="end">150.0</text>
<text x="1000.1" y="172.1" font-size="8.5" text-anchor="end">100.0</text>
<text x="1000.1" y="199.1" font-size="8.5" text-anchor="end">50.0</text>
<text x="1000.1" y="225.1" font-size="8.5" text-anchor="end">0.0</text>
<text x="1010.43" y="230.3" font-size="8.5" text-anchor="end" transform="rotate(-90 1010.43 230.3)">0</text>
<text x="1022.1" y="230.3" font-size="8.5" text-anchor="end" transform="rotate(-90 1022.1 230.3)">10</text>
<text x="1033.77" y="230.3" font-size="8.5" text-anchor="end" transform="rotate(-90 1033.77 230.3)">20</text>
<text x="1045.43" y="230.3" font-size="8.5" text-anchor="end" transform="rotate(-90 1045.43 230.3)">30</text>
<text x="1057.1" y="230.3" font-size="8.5" text-anchor="end" transform="rotate(-90 1057.1 230.3)">40</text>
<text x="1068.77" y="230.3" font-size="8.5" text-anchor="end" transform="rotate(-90 1068.77 230.3)">50</text>
<text x="1080.43" y="230.3" font-size="8.5" text-anchor="end" transform="rotate(-90 1080.43 230.3)">60</text>
<text x="1092.1" y="230.3" font-size="8.5" text-anchor="end" transform="rotate(-90 1092.1 230.3)">70</text>
<text x="1103.77" y="230.3" font-size="8.5" text-anchor="end" transform="rotate(-90 1103.77 230.3)">80</text>
<text x="1115.43" y="230.3" font-size="8.5" text-anchor="end" transform="rotate(-90 1115.43 230.3)">90</text>
<text x="1127.1" y="230.3" font-size="8.5" text-anchor="end" transform="rotate(-90 1127.1 230.3)">100</text>
<text x="1138.77" y="230.3" font-size="8.5" text-anchor="end" transform="rotate(-90 1138.77 230.3)">110</text>
<text x="1150.43" y="230.3" font-size="8.5" text-anchor="end" transform="rotate(-90 1150.43 230.3)">120</text>
<text x="1162.1" y="230.3" font-size="8.5" text-anchor="end" transform="rotate(-90 1162.1 230.3)">130</text>
<text x="1173.77" y="230.3" font-size="8.5" text-anchor="end" transform="rotate(-90 1173.77 230.3)">140</text>
<text x="1185.43" y="230.3" font-size="8.5" text-anchor="end" transform="rotate(-90 1185.43 230.3)">150</text>
<text x="1197.1" y="230.3" font-size="8.5" text-anchor="end" transform="rotate(-90 1197.1 230.3)">160</text>
<text x="1208.77" y="230.3" font-size="8.5" text-anchor="end" transform="rotate(-90 1208.77 230.3)">170</text>
<text x="1220.43" y="230.3" font-size="8.5" text-anchor="end" transform="rotate(-90 1220.43 230.3)">180</text>
<text x="1232.1" y="230.3" font-size="8.5" text-anchor="end" transform="rotate(-90 1232.1 230.3)">190</text>
<text x="1243.77" y="230.3" font-size="8.5" text-anchor="end" transform="rotate(-90 1243.77 230.3)">200</text>
<text x="972" y="155.9" font-size="8.3" text-anchor="middle" font-weight="700" transform="rotate(-90 972 155.9)" textLength="78.3" lengthAdjust="spacingAndGlyphs">Effective Dose (mg)</text>
<text x="1125.2" y="258.8" font-size="8" text-anchor="middle" font-weight="700" textLength="38.5" lengthAdjust="spacingAndGlyphs">Cycle Day</text>
<path d="M1008.08 117.96L1009.25 139.08L1010.42 156.6L1011.58 117.96L1012.75 139.08L1013.92 156.6L1015.08 117.96L1016.25 139.08L1017.42 156.6L1018.58 117.96L1019.75 139.08L1020.92 156.6L1022.08 117.96L1023.25 139.08L1024.42 156.6L1025.58 117.96L1026.75 139.08L1027.92 156.6L1029.08 117.96L1030.25 139.08L1031.42 156.6L1032.58 117.96L1033.75 139.08L1034.92 156.6L1036.08 117.96L1037.25 139.08L1038.42 156.6L1039.58 117.96L1040.75 139.08L1041.92 155.34L1043.08 168.44L1044.25 178.98L1045.42 187.47L1046.58 194.3L1047.75 199.8L1048.92 204.22L1050.08 207.79L1051.25 210.66L1052.42 212.97L1053.58 214.83L1054.75 216.32L1055.92 217.53L1057.08 218.5L1058.25 219.28L1059.42 219.91L1060.58 220.41L1061.75 220.82L1062.92 221.15L1064.08 221.41L1065.25 221.62L1066.42 221.79L1067.58 221.93L1068.75 222.04L1069.92 222.13L1071.08 222.2L1072.25 222.26L1073.42 222.31L1074.58 222.35L1075.75 222.38L1076.92 222.4L1078.08 222.42L1079.25 222.44L1080.42 222.45L1081.58 222.46L1082.75 222.47L1083.92 222.47L1085.08 222.48L1086.25 222.48L1087.42 222.49L1088.58 222.49L1089.75 222.49L1090.92 222.49L1092.08 222.49L1093.25 222.5L1094.42 222.5L1095.58 222.5L1096.75 222.5L1097.92 222.5L1099.08 222.5L1100.25 222.5L1101.42 222.5L1102.58 222.5L1103.75 222.5L1104.92 222.5L1106.08 222.5L1107.25 222.5L1108.42 222.5L1109.58 222.5L1110.75 222.5L1111.92 222.5L1113.08 222.5L1114.25 222.5L1115.42 222.5L1116.58 222.5L1117.75 222.5L1118.92 222.5L1120.08 222.5L1121.25 222.5L1122.42 222.5L1123.58 222.5L1124.75 222.5L1125.92 222.5L1127.08 222.5L1128.25 222.5L1129.42 222.5L1130.58 222.5L1131.75 222.5L1132.92 222.5L1134.08 222.5L1135.25 222.5L1136.42 222.5L1137.58 222.5L1138.75 222.5L1139.92 222.5L1141.08 222.5L1142.25 222.5L1143.42 222.5L1144.58 222.5L1145.75 222.5L1146.92 222.5L1148.08 222.5L1149.25 222.5L1150.42 222.5L1151.58 222.5L1152.75 222.5L1153.92 222.5L1155.08 222.5L1156.25 222.5L1157.42 222.5L1158.58 222.5L1159.75 222.5L1160.92 222.5L1162.08 222.5L1163.25 222.5L1164.42 222.5L1165.58 222.5L1166.75 222.5L1167.92 222.5L1169.08 222.5L1170.25 222.5L1171.42 222.5L1172.58 222.5L1173.75 222.5L1174.92 222.5L1176.08 222.5L1177.25 222.5L1178.42 222.5L1179.58 222.5L1180.75 222.5L1181.92 222.5L1183.08 222.5L1184.25 222.5L1185.42 222.5L1186.58 222.5L1187.75 222.5L1188.92 222.5L1190.08 222.5L1191.25 222.5L1192.42 222.5L1193.58 222.5L1194.75 222.5L1195.92 222.5L1197.08 222.5L1198.25 222.5L1199.42 222.5L1200.58 222.5L1201.75 222.5L1202.92 222.5L1204.08 222.5L1205.25 222.5L1206.42 222.5L1207.58 222.5L1208.75 222.5L1209.92 222.5L1211.08 222.5L1212.25 222.5L1213.42 222.5L1214.58 222.5L1215.75 222.5L1216.92 222.5L1218.08 222.5L1219.25 222.5L1220.42 222.5L1221.58 222.5L1222.75 222.5L1223.92 222.5L1225.08 222.5L1226.25 222.5L1227.42 222.5L1228.58 222.5L1229.75 222.5L1230.92 222.5L1232.08 222.5L1233.25 222.5L1234.42 222.5L1235.58 222.5L1236.75 222.5L1237.92 222.5L1239.08 222.5L1240.25 222.5L1241.42 222.5" fill="none" stroke="#0a6aff" stroke-width="1.05" stroke-linejoin="round"/>
</g>
<g id="chart-empty-a">
<rect x="623" y="332" width="306.8" height="148" fill="#1b1b1b"/>
<rect x="621" y="330" width="308.2" height="149.4" fill="#000"/>
<rect x="623" y="332" width="304.2" height="145.4" fill="#fff"/>
<line x1="679.5" y1="361.5" x2="918.1" y2="361.5" stroke="#3a3a3a" stroke-width="1"/>
<text x="672.3" y="364.1" font-size="8.5" text-anchor="end">1.0</text>
<line x1="679.5" y1="375.5" x2="918.1" y2="375.5" stroke="#3a3a3a" stroke-width="1"/>
<text x="672.3" y="378.1" font-size="8.5" text-anchor="end">0.9</text>
<line x1="679.5" y1="388.5" x2="918.1" y2="388.5" stroke="#3a3a3a" stroke-width="1"/>
<text x="672.3" y="391.1" font-size="8.5" text-anchor="end">0.8</text>
<line x1="679.5" y1="401.5" x2="918.1" y2="401.5" stroke="#3a3a3a" stroke-width="1"/>
<text x="672.3" y="404.1" font-size="8.5" text-anchor="end">0.7</text>
<line x1="679.5" y1="415.5" x2="918.1" y2="415.5" stroke="#3a3a3a" stroke-width="1"/>
<text x="672.3" y="418.1" font-size="8.5" text-anchor="end">0.6</text>
<line x1="679.5" y1="428.5" x2="918.1" y2="428.5" stroke="#3a3a3a" stroke-width="1"/>
<text x="672.3" y="431.1" font-size="8.5" text-anchor="end">0.5</text>
<line x1="679.5" y1="441.5" x2="918.1" y2="441.5" stroke="#3a3a3a" stroke-width="1"/>
<text x="672.3" y="444.1" font-size="8.5" text-anchor="end">0.4</text>
<line x1="679.5" y1="455.5" x2="918.1" y2="455.5" stroke="#3a3a3a" stroke-width="1"/>
<text x="672.3" y="458.1" font-size="8.5" text-anchor="end">0.3</text>
<line x1="679.5" y1="468.5" x2="918.1" y2="468.5" stroke="#3a3a3a" stroke-width="1"/>
<text x="672.3" y="471.1" font-size="8.5" text-anchor="end">0.2</text>
<line x1="679.6" y1="361" x2="679.6" y2="474" stroke="#000" stroke-width="1.25"/>
<text x="642.2" y="424.5" font-size="8.3" text-anchor="middle" font-weight="700" transform="rotate(-90 642.2 424.5)" textLength="79" lengthAdjust="spacingAndGlyphs">Effective Dose (mg)</text>
</g>
<g id="chart-empty-b">
<rect x="953" y="332" width="300.9" height="148" fill="#1b1b1b"/>
<rect x="951" y="330" width="302.3" height="149.4" fill="#000"/>
<rect x="953" y="332" width="298.3" height="145.4" fill="#fff"/>
<line x1="1009.2" y1="363.5" x2="1242.9" y2="363.5" stroke="#3a3a3a" stroke-width="1"/>
<text x="1001.4" y="366.1" font-size="8.5" text-anchor="end">1.0</text>
<line x1="1009.2" y1="376.5" x2="1242.9" y2="376.5" stroke="#3a3a3a" stroke-width="1"/>
<text x="1001.4" y="379.1" font-size="8.5" text-anchor="end">0.9</text>
<line x1="1009.2" y1="389.5" x2="1242.9" y2="389.5" stroke="#3a3a3a" stroke-width="1"/>
<text x="1001.4" y="392.1" font-size="8.5" text-anchor="end">0.8</text>
<line x1="1009.2" y1="402.5" x2="1242.9" y2="402.5" stroke="#3a3a3a" stroke-width="1"/>
<text x="1001.4" y="405.1" font-size="8.5" text-anchor="end">0.7</text>
<line x1="1009.2" y1="415.5" x2="1242.9" y2="415.5" stroke="#3a3a3a" stroke-width="1"/>
<text x="1001.4" y="418.1" font-size="8.5" text-anchor="end">0.6</text>
<line x1="1009.2" y1="428.5" x2="1242.9" y2="428.5" stroke="#3a3a3a" stroke-width="1"/>
<text x="1001.4" y="431.1" font-size="8.5" text-anchor="end">0.5</text>
<line x1="1009.2" y1="441.5" x2="1242.9" y2="441.5" stroke="#3a3a3a" stroke-width="1"/>
<text x="1001.4" y="444.1" font-size="8.5" text-anchor="end">0.4</text>
<line x1="1009.2" y1="454.5" x2="1242.9" y2="454.5" stroke="#3a3a3a" stroke-width="1"/>
<text x="1001.4" y="457.1" font-size="8.5" text-anchor="end">0.3</text>
<line x1="1009.2" y1="467.5" x2="1242.9" y2="467.5" stroke="#3a3a3a" stroke-width="1"/>
<text x="1001.4" y="470.1" font-size="8.5" text-anchor="end">0.2</text>
<line x1="1009.6" y1="363" x2="1009.6" y2="474" stroke="#000" stroke-width="1.25"/>
<text x="969.8" y="423" font-size="8.3" text-anchor="middle" font-weight="700" transform="rotate(-90 969.8 423)" textLength="79" lengthAdjust="spacingAndGlyphs">Effective Dose (mg)</text>
</g>
<rect x="675.1" y="288.2" width="85.3" height="30.1" rx="4.5" ry="4.5" fill="#fff3a9" stroke="#111" stroke-width="1"/>
<text x="717.3" y="306" font-size="9" text-anchor="middle" textLength="49.6" lengthAdjust="spacingAndGlyphs" fill="#1a4cff">Chart Export</text>
<rect x="790.1" y="289.6" width="85.3" height="29.9" rx="4.5" ry="4.5" fill="#fff3a9" stroke="#111" stroke-width="1"/>
<text x="832.3" y="307.3" font-size="9" text-anchor="middle" textLength="49.8" lengthAdjust="spacingAndGlyphs" fill="#1a4cff">Chart Export</text>
<rect x="1007.4" y="288.2" width="80.1" height="30.1" rx="4.5" ry="4.5" fill="#fff3a9" stroke="#111" stroke-width="1"/>
<text x="1047.3" y="306" font-size="9" text-anchor="middle" textLength="49.4" lengthAdjust="spacingAndGlyphs" fill="#1a4cff">Chart Export</text>
<rect x="1117.3" y="288.2" width="79.1" height="30.1" rx="4.5" ry="4.5" fill="#fff3a9" stroke="#111" stroke-width="1"/>
<text x="1156.3" y="306" font-size="9" text-anchor="middle" textLength="49.2" lengthAdjust="spacingAndGlyphs" fill="#1a4cff">Chart Export</text>
<rect x="559.9" y="242" width="30.6" height="77.4" rx="4.5" ry="4.5" fill="#fff3a9" stroke="#111" stroke-width="1"/>
<text x="578.4" y="280.2" font-size="9" text-anchor="middle" transform="rotate(-90 578.4 280.2)" textLength="50.3" lengthAdjust="spacingAndGlyphs" fill="#1a4cff">Chart Export</text>
</svg>
</body>
</html>
